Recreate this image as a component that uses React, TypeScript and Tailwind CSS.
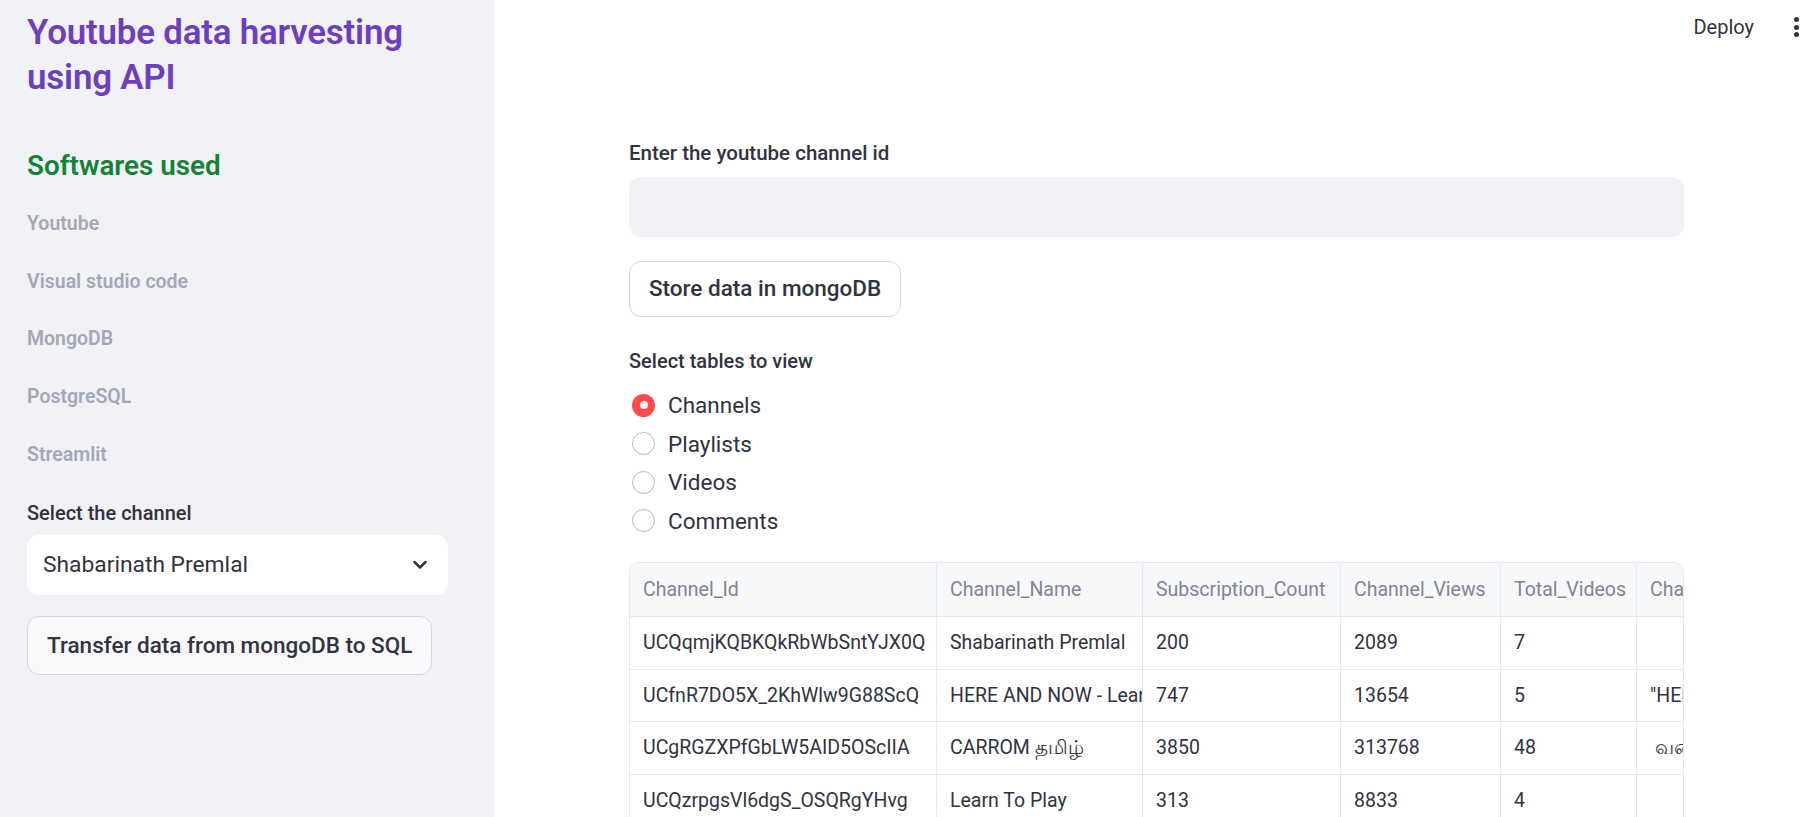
import React from "react";

const rows = [
  ["UCQqmjKQBKQkRbWbSntYJX0Q", "Shabarinath Premlal", "200", "2089", "7", ""],
  ["UCfnR7DO5X_2KhWlw9G88ScQ", "HERE AND NOW - Learn English", "747", "13654", "5", "\"HERE AND NOW\""],
  ["UCgRGZXPfGbLW5AID5OScIIA", "CARROM தமிழ்", "3850", "313768", "48", " வணக்கம் நண்பர்களே"],
  ["UCQzrpgsVl6dgS_OSQRgYHvg", "Learn To Play", "313", "8833", "4", ""],
];

const headers = ["Channel_Id", "Channel_Name", "Subscription_Count", "Channel_Views", "Total_Videos", "Channel_Description"];
const widths = ["w-[307px]", "w-[206px]", "w-[198px]", "w-[160px]", "w-[136px]", "w-[300px]"];

function Chevron() {
  return (
    <svg width="20" height="20" viewBox="0 0 20 20" fill="none">
      <path d="M4.5 7 L10 12.5 L15.5 7" stroke="#31333f" strokeWidth="2.5" strokeLinecap="round" strokeLinejoin="round" />
    </svg>
  );
}

function Radio({ label, checked }: { label: string; checked?: boolean }) {
  return (
    <div className="flex items-center h-[38.5px]">
      {checked ? (
        <div className="w-[23px] h-[23px] rounded-full bg-[#ff4b4b] flex items-center justify-center ml-[3px]">
          <div className="w-[8px] h-[8px] rounded-full bg-[#f0f2f6]" />
        </div>
      ) : (
        <div className="w-[23px] h-[23px] rounded-full border-[1.5px] border-[#b7b8bd] bg-white ml-[3px]" />
      )}
      <span className="ml-[13px] text-[22.5px] text-[#31333f] leading-none">{label}</span>
    </div>
  );
}

export default function App() {
  return (
    <div className="flex w-[1807px] h-[817px] overflow-hidden bg-white font-['Roboto','Noto_Sans',sans-serif]">
      {/* Sidebar */}
      <aside className="w-[494px] shrink-0 bg-[#f0f2f6] pl-[27px] pr-[46px] pt-[10px]">
        <h1 className="text-[34.9px] leading-[45px] font-semibold text-[#6d3fc0] tracking-[-0.2px]">
          Youtube data harvesting
          <br />
          using API
        </h1>
        <h2 className="mt-[48px] text-[27.8px] leading-[36px] font-semibold text-[#158237]">Softwares used</h2>
        <div className="mt-[11px] flex flex-col">
          {["Youtube", "Visual studio code", "MongoDB", "PostgreSQL", "Streamlit"].map((s) => (
            <div key={s} className="h-[57.6px] flex items-center text-[19.5px] font-semibold text-[#a3a8b8]">
              {s}
            </div>
          ))}
        </div>
        <div className="mt-[18px] text-[20px] leading-[24px] font-medium text-[#31333f]">Select the channel</div>
        <div className="mt-[10px] h-[60px] rounded-[12px] bg-white flex items-center justify-between pl-[16px] pr-[18px]">
          <span className="text-[22.8px] text-[#31333f]">Shabarinath Premlal</span>
          <Chevron />
        </div>
        <button className="mt-[21px] h-[59px] px-[19px] rounded-[12px] border border-[#d5d7dd] bg-[#f9f9fb] text-[22.5px] font-medium text-[#31333f]">
          Transfer data from mongoDB to SQL
        </button>
      </aside>

      {/* Main */}
      <main className="flex-1 relative">
        <div className="absolute top-[12px] right-[53px] text-[20px] text-[#31333f]">Deploy</div>
        <div className="absolute top-[17px] right-[8px] flex flex-col gap-[2.5px]">
          <div className="w-[5px] h-[5px] rounded-full bg-[#31333f]" />
          <div className="w-[5px] h-[5px] rounded-full bg-[#31333f]" />
          <div className="w-[5px] h-[5px] rounded-full bg-[#31333f]" />
        </div>

        <div className="ml-[135px] w-[1055px] pt-[141px] flex flex-col">
          <div className="text-[20.5px] leading-[24px] font-medium text-[#31333f]">Enter the youtube channel id</div>
          <div className="mt-[12px] h-[60px] rounded-[12px] bg-[#f0f2f6]" />
          <button className="mt-[24px] self-start h-[56px] px-[19px] rounded-[12px] border border-[#d5d7dd] bg-white text-[22.5px] font-medium text-[#31333f]">
            Store data in mongoDB
          </button>
          <div className="mt-[32px] text-[20px] leading-[24px] font-medium text-[#31333f]">Select tables to view</div>
          <div className="mt-[13px] flex flex-col">
            <Radio label="Channels" checked />
            <Radio label="Playlists" />
            <Radio label="Videos" />
            <Radio label="Comments" />
          </div>

          <div className="mt-[22px] w-[1055px] rounded-t-[10px] border border-[#e6e9ef] overflow-hidden">
            <div className="flex w-max bg-[#f7f8fa] h-[54px] border-b border-[#e6e9ef]">
              {headers.map((h, i) => (
                <div
                  key={h}
                  className={`${widths[i]} shrink-0 px-[13px] flex items-center text-[19.5px] text-[#808495] whitespace-nowrap overflow-hidden ${i < headers.length - 1 ? "border-r border-[#e6e9ef]" : ""}`}
                >
                  {h}
                </div>
              ))}
            </div>
            {rows.map((r, ri) => (
              <div key={ri} className="flex w-max h-[52.5px] border-b border-[#e6e9ef]">
                {r.map((c, i) => (
                  <div
                    key={i}
                    className={`${widths[i]} shrink-0 px-[13px] flex items-center text-[19.5px] text-[#31333f] whitespace-pre overflow-hidden ${i < r.length - 1 ? "border-r border-[#e6e9ef]" : ""}`}
                  >
                    {c}
                  </div>
                ))}
              </div>
            ))}
          </div>
        </div>
      </main>
    </div>
  );
}
